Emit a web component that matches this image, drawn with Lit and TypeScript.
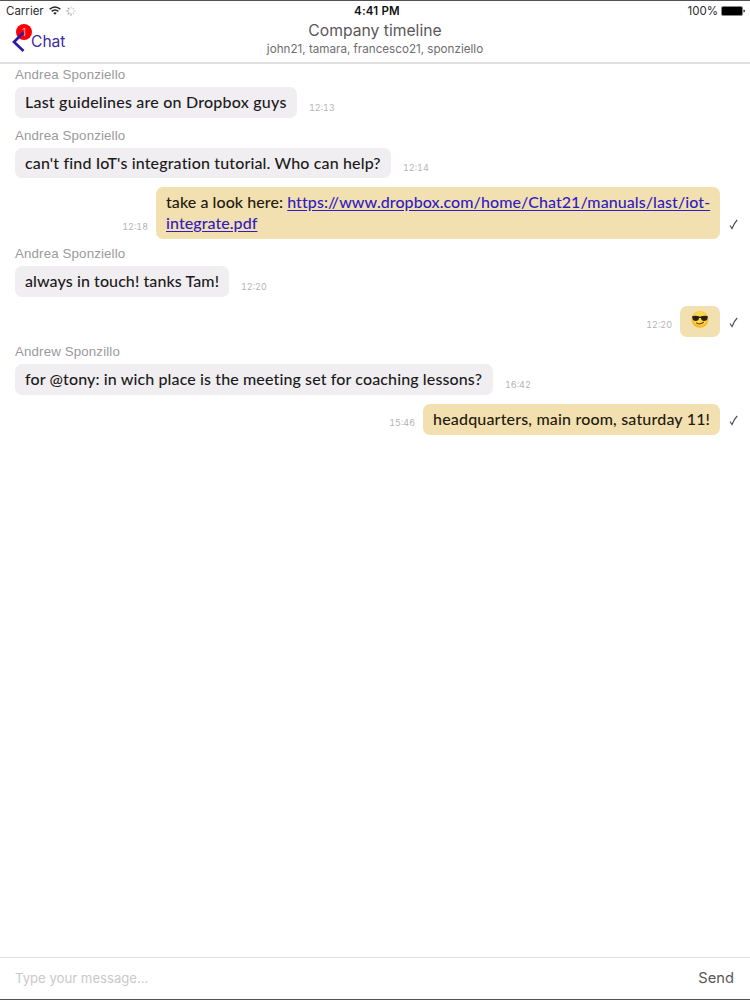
import { LitElement, html, css, svg, nothing } from 'lit';
import type { TemplateResult } from 'lit';
import { customElement, property } from 'lit/decorators.js';
import { classMap } from 'lit/directives/class-map.js';
import { styleMap } from 'lit/directives/style-map.js';

interface Message {
  sender?: string;
  body: string | TemplateResult;
  time: string;
  width: number;
  tracking?: number;
  height?: number;
  emoji?: boolean;
}

const MESSAGES: Message[] = [
  { sender: 'Andrea Sponziello', body: 'Last guidelines are on Dropbox guys', time: '12:13', width: 282, tracking: 0.22 },
  {
    sender: 'Andrea Sponziello',
    body: "can't find IoT's integration tutorial. Who can help?",
    time: '12:14',
    width: 376,
    tracking: 0.15,
    height: 30,
  },
  {
    body: html`take a look here: <a href="#">https://www.dropbox.com/home/Chat21/manuals/last/iot-<br />integrate.pdf</a>`,
    time: '12:18',
    width: 564,
    tracking: 0.07,
    height: 52,
  },
  { sender: 'Andrea Sponziello', body: 'always in touch! tanks Tam!', time: '12:20', width: 214, tracking: 0.09 },
  { body: '', emoji: true, time: '12:20', width: 40 },
  {
    sender: 'Andrew Sponzillo',
    body: 'for @tony: in wich place is the meeting set for coaching lessons?',
    time: '16:42',
    width: 478,
    tracking: 0.12,
  },
  { body: 'headquarters, main room, saturday 11!', time: '15:46', width: 297, tracking: 0.18 },
];

const sunglasses = html`
  <svg width="19" height="19" viewBox="-0.5 0 20 20" role="img" aria-label="😎">
    <circle cx="10" cy="10" r="8.8" fill="#f9b825" />
    <circle cx="10" cy="9" r="7.4" fill="#ffd84a" />
    <path
      d="M1.6 6.6 Q5.5 5.6 10 7 Q14.5 5.6 18.4 6.6 L18 8.2 Q17.6 11.6 14.3 11.6 Q11.6 11.6 10.9 8.5 L9.1 8.5 Q8.4 11.6 5.7 11.6 Q2.4 11.6 2 8.2 Z"
      fill="#2b2118"
    />
    <path d="M6.3 13.6 Q10.3 16 13.7 12.9" fill="none" stroke="#7a4514" stroke-width="1.2" stroke-linecap="round" />
  </svg>
`;

@customElement('chat-message')
export class ChatMessage extends LitElement {
  static styles = css`
    :host {
      display: block;
    }
    .sender {
      height: 13px;
      line-height: 13px;
      margin-bottom: 6px;
      font-family: 'Liberation Sans', Arial, sans-serif;
      font-size: 13.3px;
      letter-spacing: 0.14px;
      color: #9b999c;
    }
    .row {
      display: flex;
      align-items: flex-end;
    }
    .row.outgoing {
      justify-content: flex-end;
    }
    .bubble {
      box-sizing: border-box;
      padding: 4px 0 0 10px;
      border-radius: 7px;
      background: #f0eef0;
      color: #1c1a1d;
      font-family: Lato, sans-serif;
      font-size: 16px;
      font-weight: 500;
      font-variant-ligatures: none;
      line-height: 21px;
      white-space: nowrap;
    }
    .outgoing .bubble {
      background: #f3e0b1;
      color: #241a0d;
    }
    .bubble a {
      color: #2f1cc4;
      text-decoration: underline;
      text-underline-offset: 2px;
    }
    .bubble svg {
      display: block;
    }
    .time {
      margin: 0 12px 4px;
      font-family: Inter, sans-serif;
      font-size: 9px;
      font-variant-numeric: tabular-nums;
      line-height: 12px;
      color: #b5b3b6;
    }
    .outgoing .time {
      margin: 0 8px 6px;
    }
    .check {
      width: 9px;
      height: 11px;
      margin: 0 0 9px 9px;
    }
  `;

  @property({ attribute: false }) message!: Message;

  render() {
    const { sender, body, time, width, tracking = 0, height = 31, emoji } = this.message;
    const outgoing = !sender;
    const bubble = html`
      <div
        class="bubble"
        style=${styleMap({ width: `${width}px`, height: `${height}px`, letterSpacing: `${tracking}px` })}
      >${emoji ? sunglasses : html`<span class="text">${body}</span>`}</div>
    `;
    const stamp = html`<span class="time">${time}</span>`;

    return html`
      ${sender ? html`<div class="sender">${sender}</div>` : nothing}
      <div class=${classMap({ row: true, outgoing })}>
        ${outgoing ? html`${stamp}${bubble}` : html`${bubble}${stamp}`}
        ${outgoing
          ? html`<svg class="check" viewBox="0 0 9 11">
              <path d="M1 6.5 L3 9.5 Q4.8 4.5 8.2 1" fill="none" stroke="#4a484b" stroke-width="1.1" />
            </svg>`
          : nothing}
      </div>
    `;
  }
}

@customElement('app-root')
export class AppRoot extends LitElement {
  static styles = css`
    :host {
      display: flex;
      flex-direction: column;
      box-sizing: border-box;
      height: 1000px;
      border-top: 1px solid #535155;
      border-bottom: 1px solid #535155;
      background: #fff;
      font-family: Inter, sans-serif;
      overflow: hidden;
    }
    header {
      box-sizing: border-box;
      height: 63px;
      border-bottom: 2px solid #dfdfdf;
    }
    .status {
      display: grid;
      grid-template-columns: 1fr auto 1fr;
      align-items: center;
      height: 19px;
      padding: 0 5px 0 6px;
      font-size: 11.5px;
      color: #2e2c2f;
    }
    .carrier,
    .power {
      display: flex;
      align-items: center;
    }
    .carrier {
      gap: 5px;
    }
    .power {
      justify-content: flex-end;
      gap: 3px;
    }
    .clock {
      font-weight: 600;
      color: #111;
      letter-spacing: 0.2px;
      padding-left: 3px;
    }
    .nav {
      display: grid;
      grid-template-columns: 1fr auto 1fr;
      height: 42px;
    }
    .back {
      display: flex;
      align-items: flex-start;
      position: relative;
      padding: 11px 0 0 12px;
      gap: 6px;
      font-size: 15.6px;
      line-height: 21px;
      color: #3c2ba3;
    }
    .badge {
      position: absolute;
      left: 16px;
      top: 4px;
      width: 16px;
      height: 16px;
      border-radius: 50%;
      background: #fb0007;
      color: #ffb5b5;
      font-size: 10px;
      line-height: 16px;
      text-align: center;
    }
    .chevron {
      position: relative;
    }
    .titles {
      text-align: center;
    }
    .title {
      padding-top: 1px;
      font-size: 15.7px;
      line-height: 20px;
      color: #59575a;
    }
    .members {
      font-size: 11.65px;
      line-height: 16px;
      color: #6f6d70;
    }
    main {
      flex: 1;
      display: flex;
      flex-direction: column;
      gap: 8.5px;
      padding: 4px 12px 0 15px;
    }
    chat-message:first-child {
      margin-bottom: 2.5px;
    }
    footer {
      display: flex;
      align-items: center;
      justify-content: space-between;
      box-sizing: border-box;
      height: 42px;
      padding: 0 16px 2px 15px;
      border-top: 1px solid #e2e1e2;
    }
    .placeholder {
      font-size: 13.15px;
      color: #cbc8cc;
    }
    .send {
      font-size: 14.7px;
      color: #59575a;
    }
  `;

  render() {
    return html`
      <header>
        <div class="status">
          <div class="carrier">
            <span class="carrier-name">Carrier</span>
            <svg width="12" height="9" viewBox="0 0 12 9" fill="none" stroke="#222" stroke-width="1.5">
              <path d="M0.6 3.3 Q6 -1.4 11.4 3.3" />
              <path d="M2.6 5.4 Q6 2.5 9.4 5.4" />
              <path d="M6 8.8 L4.2 6.9 Q6 5.5 7.8 6.9 Z" fill="#222" stroke="none" />
            </svg>
            <svg width="10" height="10" viewBox="-5 -5 10 10" stroke-width="1">
              ${[0, 45, 90, 135, 180, 225, 270, 315].map(
                (a, i) => svg`<path d="M0 -2.4 V-4.6" stroke=${i > 3 ? '#8d8b8e' : '#c9c7ca'} transform="rotate(${a})" />`
              )}
            </svg>
          </div>
          <span class="clock">4:41 PM</span>
          <div class="power">
            <span class="percent">100%</span>
            <svg width="24" height="10" viewBox="0 0 24 10">
              <rect x="0.5" y="0.5" width="21" height="9" rx="1.5" fill="#000" stroke="#8a888b" />
              <path d="M22.5 3.4 Q24 3.6 24 5 Q24 6.4 22.5 6.6 Z" fill="#222" />
            </svg>
          </div>
        </div>
        <div class="nav">
          <div class="back">
            <span class="badge">1</span>
            <svg class="chevron" width="13" height="21" viewBox="0 0 13 21">
              <path d="M11.5 1.5 L2 11 L11.5 20" fill="none" stroke="#2b1aa8" stroke-width="2.7" />
            </svg>
            <span class="back-label">Chat</span>
          </div>
          <div class="titles">
            <div class="title">Company timeline</div>
            <div class="members">john21, tamara, francesco21, sponziello</div>
          </div>
        </div>
      </header>
      <main>
        ${MESSAGES.map((m) => html`<chat-message .message=${m}></chat-message>`)}
      </main>
      <footer>
        <span class="placeholder">Type your message...</span>
        <span class="send">Send</span>
      </footer>
    `;
  }
}

declare global {
  interface HTMLElementTagNameMap {
    'app-root': AppRoot;
    'chat-message': ChatMessage;
  }
}
